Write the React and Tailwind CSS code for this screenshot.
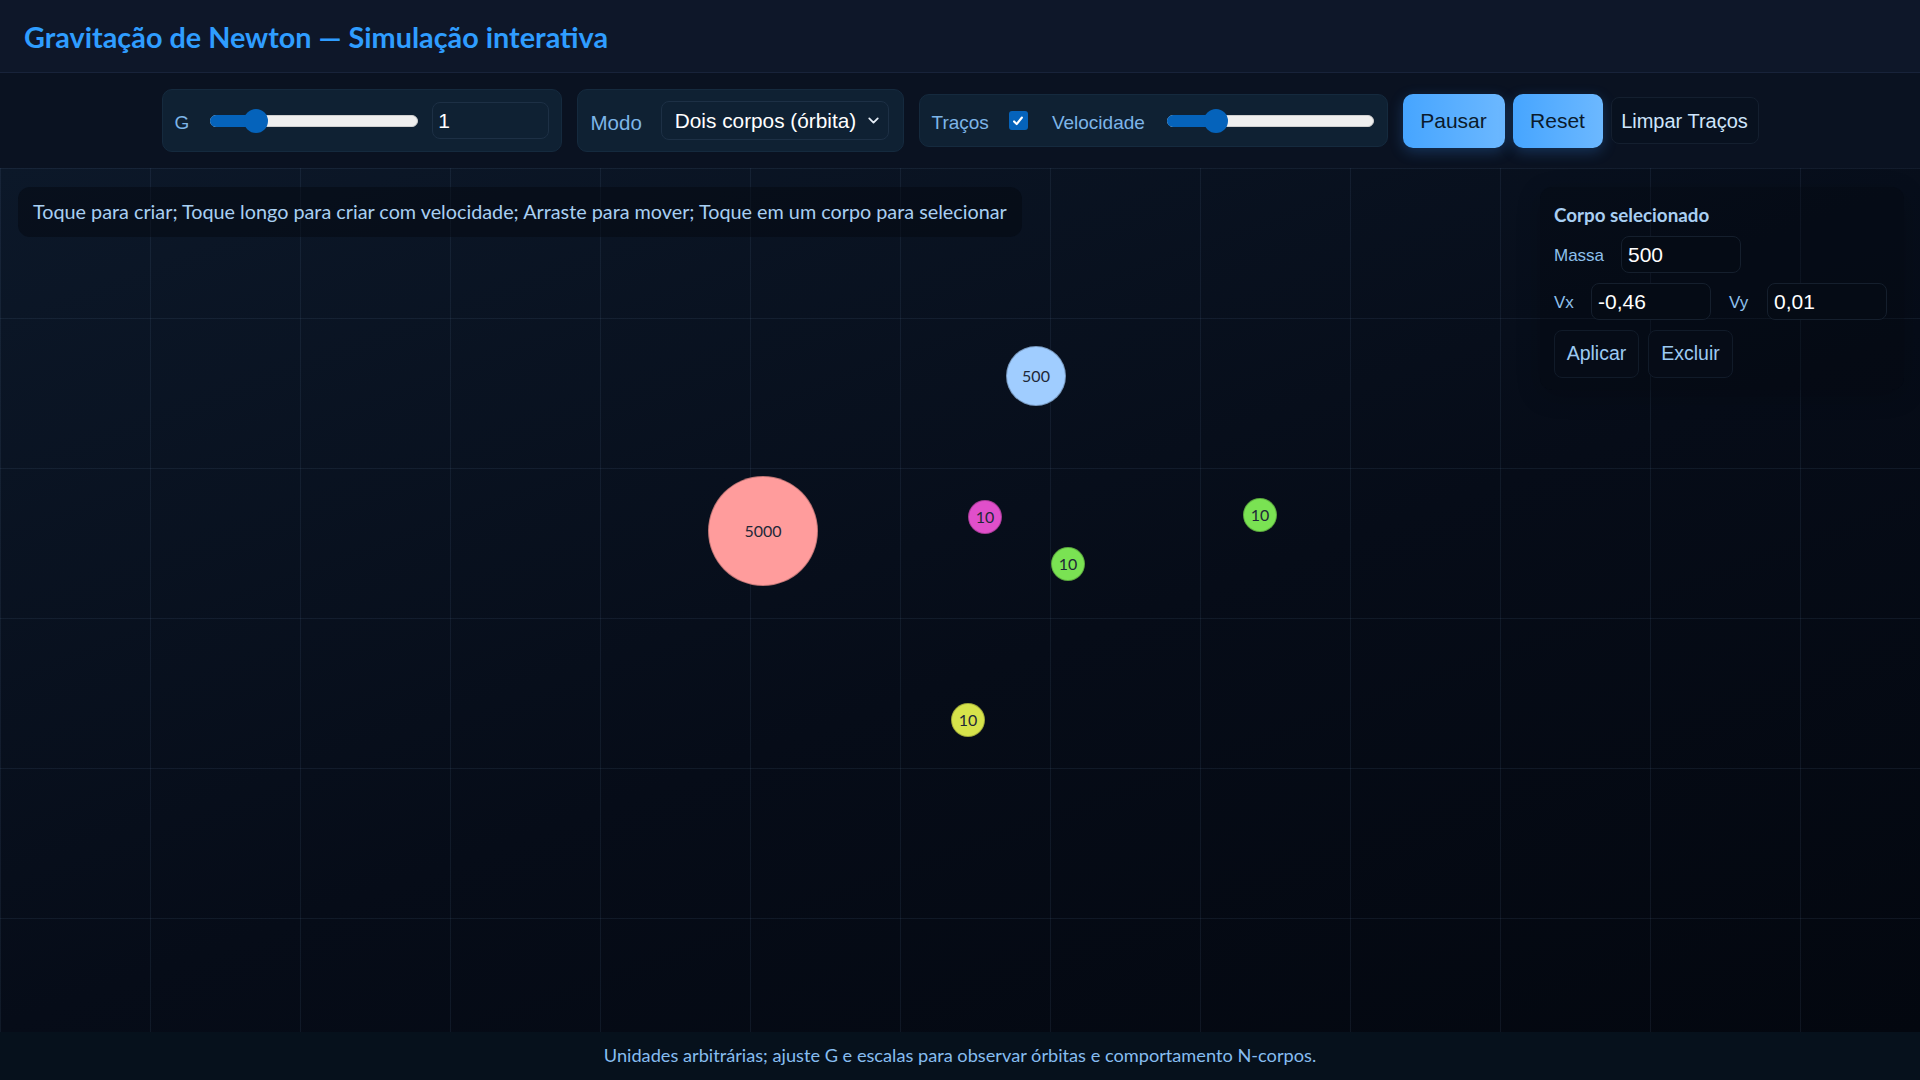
import React from "react";
import { ChevronDown } from "lucide-react";

function Slider({ width, pos }) {
  return (
    <div className="relative h-[24px] shrink-0" style={{ width }}>
      <div className="absolute left-0 right-0 top-1/2 -translate-y-1/2 h-[12px] rounded-full bg-[#efefef] border border-[#cfcfcf]" />
      <div
        className="absolute left-0 top-1/2 -translate-y-1/2 h-[12px] rounded-l-full bg-[#0563bb]"
        style={{ width: pos }}
      />
      <div
        className="absolute top-0 h-[24px] w-[24px] -translate-x-1/2 rounded-full bg-[#0563bb]"
        style={{ left: pos }}
      />
    </div>
  );
}

const bodies = [
  { x: 763, y: 363, r: 55, c: "bg-[#ff9c9c]", m: "5000" },
  { x: 1036, y: 208, r: 30, c: "bg-[#a0cdff]", m: "500" },
  { x: 985, y: 349, r: 17, c: "bg-[#e04fca]", m: "10" },
  { x: 1068, y: 396, r: 17, c: "bg-[#7ae253]", m: "10" },
  { x: 1260, y: 347, r: 17, c: "bg-[#7ae253]", m: "10" },
  { x: 968, y: 552, r: 17, c: "bg-[#d6e34b]", m: "10" },
];

export default function App() {
  return (
    <div className="h-screen w-full flex flex-col bg-[#0a1221] overflow-hidden">
      <header className="h-[73px] shrink-0 flex items-center px-6 bg-[#0e1729] border-b border-[#18233a]">
        <h1 className="mt-[2px] font-['Lato',sans-serif] font-bold text-[28.8px] text-[#2f9dff] leading-none">
          Gravitação de Newton — Simulação interativa
        </h1>
      </header>

      <div className="h-[95px] shrink-0 flex items-center justify-center gap-[15px] bg-[#0a1221] font-['Liberation_Sans',Arial,sans-serif]">
        <div className="h-[63px] w-[400px] flex items-center rounded-[10px] bg-[#0f2133] border border-[#152a3e] pl-[12px] pr-[12px]">
          <span className="mt-[5px] text-[19px] text-[#7db5e8]">G</span>
          <div className="ml-[21px]">
            <Slider width={208} pos={46} />
          </div>
          <div className="ml-[14px] h-[37px] w-[118px] flex items-center rounded-[8px] border border-[#1d3045] bg-[#0f2133] px-[5px] text-[21px] text-white">
            1
          </div>
        </div>

        <div className="h-[63px] w-[327px] flex items-center rounded-[10px] bg-[#0f2133] border border-[#152a3e] pl-[13px] pr-[12px]">
          <span className="mt-[5px] text-[20.5px] text-[#7db5e8]">Modo</span>
          <div className="ml-[19px] h-[39px] w-[228px] flex items-center justify-between rounded-[8px] border border-[#1d3045] bg-[#0f2133] pl-[13px] pr-[6px] text-[20.8px] text-white">
            <span>Dois corpos (órbita)</span>
            <ChevronDown size={17} strokeWidth={2.5} className="text-[#e6eef7]" />
          </div>
        </div>

        <div className="h-[53px] w-[469px] flex items-center rounded-[10px] bg-[#0f2133] border border-[#152a3e] pl-[12px]">
          <span className="mt-[5px] text-[19px] text-[#7db5e8]">Traços</span>
          <div className="ml-[20px] h-[19px] w-[19px] rounded-[3px] bg-[#0563bb] flex items-center justify-center">
            <svg viewBox="0 0 16 16" width="14" height="14">
              <path d="M3.5 8.5 L6.5 11.5 L12.5 4" fill="none" stroke="white" strokeWidth="2.4" strokeLinecap="round" strokeLinejoin="round" />
            </svg>
          </div>
          <span className="mt-[5px] ml-[24px] text-[19px] text-[#7db5e8]">Velocidade</span>
          <div className="ml-[22px]">
            <Slider width={207} pos={49} />
          </div>
        </div>

        <div className="flex items-center gap-[8px]">
          <button className="h-[54px] w-[102px] rounded-[10px] bg-[linear-gradient(90deg,#46a5ff,#6cb8ff)] text-[21px] text-[#0b1a2c] shadow-[0_4px_14px_rgba(60,150,255,0.25)]">
            Pausar
          </button>
          <button className="h-[54px] w-[90px] rounded-[10px] bg-[linear-gradient(90deg,#46a5ff,#6cb8ff)] text-[21px] text-[#0b1a2c] shadow-[0_4px_14px_rgba(60,150,255,0.25)]">
            Reset
          </button>
          <button className="h-[47px] w-[148px] rounded-[8px] bg-[#08111f] border border-[#141f2f] text-[20px] text-[#cfe5fb]">
            Limpar Traços
          </button>
        </div>
      </div>

      <div className="relative flex-1 [background-image:linear-gradient(rgba(110,140,180,0.11)_1px,transparent_1px),linear-gradient(90deg,rgba(110,140,180,0.11)_1px,transparent_1px),linear-gradient(160deg,#0c1829,#060c18_55%,#03070f)] [background-size:150px_150px,150px_150px,100%_100%]">
        <div className="absolute left-[18px] top-[19px] h-[50px] w-[1004px] flex items-center rounded-[12px] bg-[rgba(3,8,16,0.5)] pl-[15px] font-['Lato',sans-serif] text-[19.8px] text-[#a9cff2]">
          Toque para criar; Toque longo para criar com velocidade; Arraste para mover; Toque em um corpo para selecionar
        </div>

        {bodies.map((b, i) => (
          <div
            key={i}
            className={`absolute flex items-center justify-center rounded-full ${b.c} font-['Lato',sans-serif] text-[16px] text-[#1e2838] border border-[rgba(0,0,0,0.25)]`}
            style={{ left: b.x - b.r, top: b.y - b.r, width: b.r * 2, height: b.r * 2 }}
          >
            {b.m}
          </div>
        ))}

        <div className="absolute left-[1540px] top-[19px] w-[364px] h-[203px] rounded-[12px] bg-[rgba(2,6,12,0.3)] shadow-[0_6px_24px_rgba(0,0,0,0.18)] pl-[14px] pt-[17px] flex flex-col">
          <div className="font-['Lato',sans-serif] font-bold text-[18.8px] text-[#a9cff2] leading-[22px]">
            Corpo selecionado
          </div>
          <div className="mt-[10px] flex items-center">
            <span className="mt-[3px] w-[67px] font-['Liberation_Sans',Arial,sans-serif] text-[17px] text-[#8ec0ec]">Massa</span>
            <div className="h-[37px] w-[120px] flex items-center rounded-[8px] border border-[#151f2d] bg-[#050b15] px-[6px] font-['Liberation_Sans',Arial,sans-serif] text-[21px] text-white">
              500
            </div>
          </div>
          <div className="mt-[10px] flex items-center font-['Liberation_Sans',Arial,sans-serif]">
            <span className="mt-[3px] w-[37px] text-[17px] text-[#8ec0ec]">Vx</span>
            <div className="h-[37px] w-[120px] flex items-center rounded-[8px] border border-[#151f2d] bg-[#050b15] px-[6px] text-[21px] text-white">
              -0,46
            </div>
            <span className="mt-[3px] ml-[18px] w-[38px] text-[17px] text-[#8ec0ec]">Vy</span>
            <div className="h-[37px] w-[120px] flex items-center rounded-[8px] border border-[#151f2d] bg-[#050b15] px-[6px] text-[21px] text-white">
              0,01
            </div>
          </div>
          <div className="mt-[10px] flex items-center gap-[9px] font-['Liberation_Sans',Arial,sans-serif]">
            <button className="h-[48px] w-[85px] rounded-[8px] border border-[#111b29] bg-[#060c17] text-[19.5px] text-[#9ccaf2]">
              Aplicar
            </button>
            <button className="h-[48px] w-[85px] rounded-[8px] border border-[#111b29] bg-[#060c17] text-[19.5px] text-[#9ccaf2]">
              Excluir
            </button>
          </div>
        </div>
      </div>

      <footer className="h-[48px] shrink-0 flex items-center justify-center bg-[#06111c] font-['Lato',sans-serif] text-[18.2px] text-[#86bdf0]">
        Unidades arbitrárias; ajuste G e escalas para observar órbitas e comportamento N-corpos.
      </footer>
    </div>
  );
}
